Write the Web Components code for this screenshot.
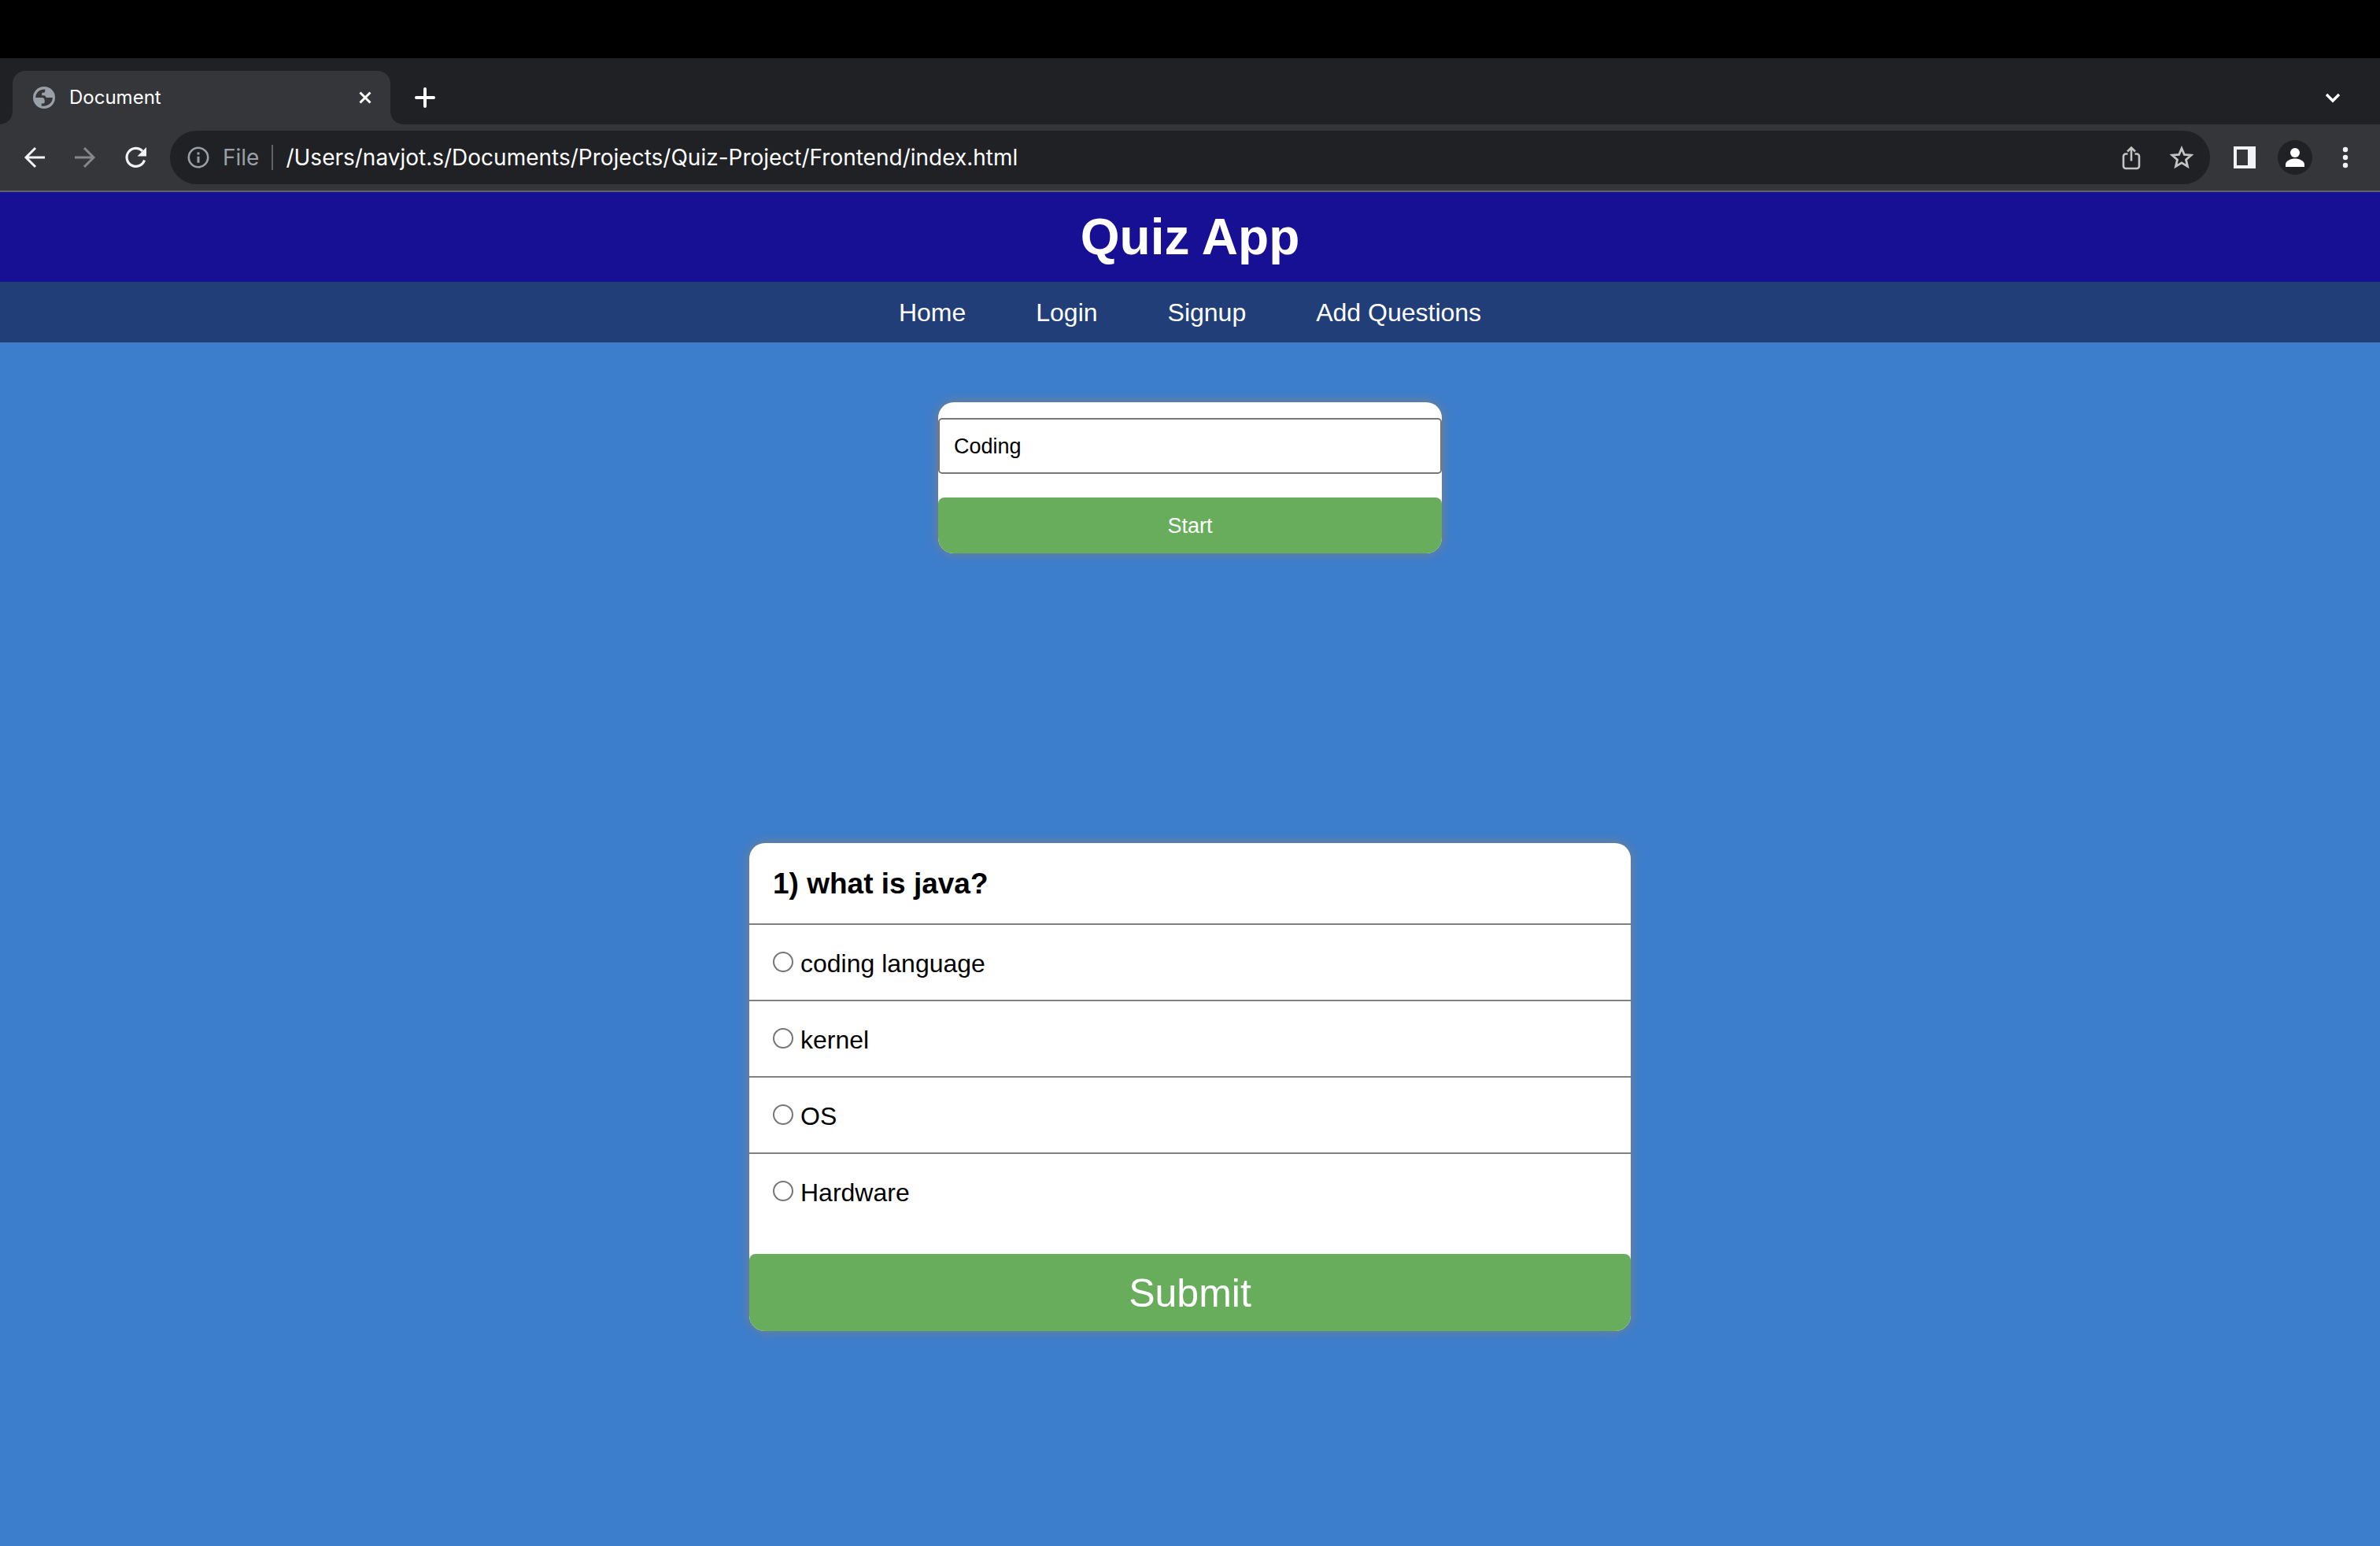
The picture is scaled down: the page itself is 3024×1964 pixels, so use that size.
<!DOCTYPE html>
<html lang="en">
<head>
<meta charset="utf-8">
<title>Document</title>
<style>
  html, body { margin: 0; min-height: 100vh; }
  body {
    display: flex; flex-direction: column;
    font-family: "Liberation Sans", Arial, Helvetica, sans-serif;
    background: #3c7dcc; color: #000;
  }
</style>
</head>
<body>
<browser-chrome></browser-chrome>
<quiz-header>Quiz App</quiz-header>
<quiz-nav>
  <quiz-link href="#home">Home</quiz-link>
  <quiz-link href="#login">Login</quiz-link>
  <quiz-link href="#signup">Signup</quiz-link>
  <quiz-link href="#add">Add Questions</quiz-link>
</quiz-nav>
<quiz-page>
  <quiz-picker slot="picker"></quiz-picker>
  <quiz-question heading="1) what is java?" options="coding language|kernel|OS|Hardware"></quiz-question>
</quiz-page>

<script>
function define(name, html, setup) {
  const template = document.createElement('template');
  template.innerHTML = html;
  customElements.define(name, class extends HTMLElement {
    constructor() {
      super();
      this.attachShadow({ mode: 'open' }).append(template.content.cloneNode(true));
    }
    connectedCallback() { if (setup) setup(this, this.shadowRoot); }
  });
}

define('browser-tab', `
<style>
  :host {
    display: flex; align-items: center; box-sizing: border-box;
    width: 480px; height: 68px; padding: 0 22px 0 24px; margin-left: 16px;
    background: #35363a; border-radius: 16px 16px 0 0; position: relative;
    font: 24px/32px Inter, Roboto, sans-serif; color: #fff;
  }
  :host::before, :host::after {
    content: ""; position: absolute; bottom: 0; width: 16px; height: 16px;
  }
  :host::before { left: -16px; background: radial-gradient(circle at 0 0, transparent 15.5px, #35363a 16px); }
  :host::after { right: -16px; background: radial-gradient(circle at 100% 0, transparent 15.5px, #35363a 16px); }
  svg { display: block; }
  span { flex: 1; margin-left: 16px; }
  button { border: 0; padding: 0; background: none; }
</style>
<svg width="32" height="32" viewBox="0 0 32 32"><circle cx="16" cy="16" r="14" fill="#9aa0a6"/><path d="M5.200 16C5.200 10 10 5.200 17.300 5.400V7.500c0 1.500-1 2.300-2.300 2.300h-1.700v2c0 1-.6 1.500-1.500 1.500H13l2.500 0c2 0 2.500 1 3 2.700h8.300c0 6.500-5.500 11.700-14.100 10.500V23.500h2c1.500 0 2-.8 2-2v-1.700c0-2.500-1-3.800-3.700-3.800z" fill="#35363a"/></svg>
<span><slot></slot></span>
<button aria-label="Close tab"><svg width="20" height="20" viewBox="0 0 20 20"><path d="M3.500 3.500l13 13M16.500 3.500l-13 13" stroke="#fff" stroke-width="3"/></svg></button>
`);

define('browser-chrome', `
<style>
  :host { display: block; }
  .notch { height: 74px; background: #000; }
  .tabs { display: flex; align-items: flex-end; height: 84px; background: #202124; }
  button { border: 0; padding: 0; background: none; display: flex; align-items: center; justify-content: center; }
  svg { display: block; }
  .tabs button { height: 68px; width: 56px; }
  .plus { margin-left: 16px; }
  .tabs .menu { margin-left: auto; margin-right: 32px; }
  .bar {
    display: flex; align-items: center; height: 84px; padding: 0 12px;
    background: #35363a; border-bottom: 2px solid #5f6368;
    font: 28px/36px Inter, Roboto, sans-serif;
  }
  .bar button { width: 64px; height: 64px; }
  .omni {
    flex: 1; display: flex; align-items: center; height: 68px; margin: 0 12px;
    border-radius: 34px; background: #202124; color: #9aa0a6;
  }
  .omni .info { width: 32px; margin: 0 15px 0 20px; }
  .sep { width: 2px; height: 32px; margin: 0 16px; background: #5f6368; }
  input { flex: 1; border: 0; padding: 0; background: none; color: #fff; font: inherit; outline: 0; }
  .omni .star { margin-right: 4px; }
</style>
<div class="notch"></div>
<div class="tabs">
  <browser-tab>Document</browser-tab>
  <button class="plus" aria-label="New tab"><svg width="28" height="28" viewBox="0 0 28 28"><path d="M14 3v22M3 14h22" stroke="#fff" stroke-width="4" stroke-linecap="round"/></svg></button>
  <button class="menu" aria-label="Search tabs"><svg width="24" height="24" viewBox="0 0 24 24"><path d="M4 8l8 8 8-8" fill="none" stroke="#fff" stroke-width="3.400"/></svg></button>
</div>
<div class="bar">
  <button aria-label="Back"><svg width="32" height="32" viewBox="0 0 32 32"><path d="M29 16H5M17 4L5 16l12 12" fill="none" stroke="#f1f3f4" stroke-width="3"/></svg></button>
  <button aria-label="Forward"><svg width="32" height="32" viewBox="0 0 32 32"><path d="M3 16h24M15 4l12 12-12 12" fill="none" stroke="#85878a" stroke-width="3"/></svg></button>
  <button aria-label="Reload"><svg width="32" height="32" viewBox="0 0 32 32"><path d="M27.500 19.500A11.500 11.500 0 1 1 25 8" fill="none" stroke="#f1f3f4" stroke-width="3.200"/><path d="M30 3v11.500H18.500z" fill="#f1f3f4"/></svg></button>
  <div class="omni">
    <button class="info" aria-label="Site information"><svg width="32" height="32" viewBox="0 0 32 32"><circle cx="16" cy="16" r="12.200" fill="none" stroke="#9aa0a6" stroke-width="2.600"/><path d="M16 9.500v3M16 14.800v8" stroke="#9aa0a6" stroke-width="3"/></svg></button>
    <span>File</span><div class="sep"></div>
    <input aria-label="Address" value="/Users/navjot.s/Documents/Projects/Quiz-Project/Frontend/index.html">
    <button aria-label="Share"><svg width="32" height="32" viewBox="0 0 32 32"><path d="M11.500 11.500H9a3 3 0 0 0-3 3V27a3 3 0 0 0 3 3h14a3 3 0 0 0 3-3V14.500a3 3 0 0 0-3-3h-2.500M16 20.500V4M11 8.500l5-5 5 5" fill="none" stroke="#c4c4c4" stroke-width="2.600"/></svg></button>
    <button class="star" aria-label="Bookmark"><svg width="32" height="32" viewBox="0 0 32 32"><path d="M16 4.500l3.400 8 8.600.7-6.500 5.700 2 8.500-7.500-4.500-7.500 4.500 2-8.500L4 13.200l8.600-.7z" fill="none" stroke="#c4c4c4" stroke-width="2.800"/></svg></button>
  </div>
  <button aria-label="Side panel"><svg width="28" height="28" viewBox="0 0 28 28"><path fill="#f1f3f4" fill-rule="evenodd" d="M0 0h28v28H0zM4 4v20h14V4z"/></svg></button>
  <button aria-label="Profile"><svg width="44" height="44" viewBox="0 0 44 44"><circle cx="22" cy="22" r="22" fill="#202124"/><circle cx="22" cy="16" r="6" fill="#fff"/><path d="M10 34v-3c0-5 7-7.500 12-7.500S34 26 34 31v3z" fill="#fff"/></svg></button>
  <button aria-label="Menu"><svg width="8" height="28" viewBox="0 0 8 28" fill="#f1f3f4"><circle cx="4" cy="4" r="3.200"/><circle cx="4" cy="14" r="3.200"/><circle cx="4" cy="24" r="3.200"/></svg></button>
</div>
`);

define('quiz-header', `
<style>
  :host { display: block; background: #170f94; color: #fff; padding: 20px; text-align: center; }
  h1 { margin: 0; font-size: 64px; line-height: 74px; }
</style>
<h1><slot></slot></h1>
`);

define('quiz-nav', `
<style>
  :host { display: block; background: #213e79; }
  nav { display: flex; justify-content: center; gap: 89px; padding: 21px 20px 19px; }
</style>
<nav><slot></slot></nav>
`);

define('quiz-link', `
<style>
  :host { display: block; }
  a { color: #fff; text-decoration: none; font-size: 32px; line-height: 37px; display: block; }
</style>
<a><slot></slot></a>
`, (host, root) => { root.querySelector('a').href = host.getAttribute('href'); });

define('quiz-page', `
<style>
  :host { display: flex; flex-direction: column; align-items: center; gap: 368px; padding: 76px 20px; }
</style>
<slot name="picker"></slot>
<slot></slot>
`);

define('quiz-card', `
<style>
  :host {
    display: flex; flex-direction: column; background: #fff;
    border-radius: 20px; box-shadow: 0 0 14px gray; overflow: hidden;
  }
</style>
<slot></slot>
`);

const buttonStyle = `
  button {
    border: 0; border-radius: 8px; padding: 21px 20px 19px; background: #68ad5c; color: #fff;
    font-family: inherit; text-align: center; width: 100%;
  }`;

define('quiz-picker', `
<style>
  :host { display: block; width: 640px; max-width: 100%; }
  select {
    appearance: none; display: block; width: 100%; box-sizing: border-box;
    margin: 20px 0 30px; padding: 19px 18px 17px; border: 2px solid #767676; border-radius: 5px;
    background: #fff; color: #000; font: 27px/31px "Liberation Sans", Arial, sans-serif;
  }
  ${buttonStyle}
  button { font-size: 27px; line-height: 31px; }
</style>
<quiz-card>
  <select aria-label="Category"><option>Coding</option></select>
  <button>Start</button>
</quiz-card>
`);

define('quiz-question', `
<style>
  :host { display: block; width: 1120px; max-width: 100%; }
  h3 { margin: 0; padding: 30px 30px 29px; font-size: 37px; line-height: 43px; }
  .row { display: flex; align-items: center; gap: 9px; padding: 32px 30px 28px; font-size: 32px; line-height: 35px; border-top: 2px solid #808080; }
  input {
    appearance: none; margin: 0 0 6px; width: 26px; height: 26px; box-sizing: border-box;
    border: 2px solid #767676; border-radius: 50%; background: #fff;
  }
  ${buttonStyle}
  button { margin-top: 32px; font-size: 50px; line-height: 58px; }
</style>
<quiz-card>
  <h3></h3>
  <div id="options"></div>
  <button>Submit</button>
</quiz-card>
`, (host, root) => {
  root.querySelector('h3').textContent = host.getAttribute('heading');
  host.getAttribute('options').split('|').forEach((text, i) => {
    const row = document.createElement('div');
    row.className = 'row';
    const input = document.createElement('input');
    input.type = 'radio';
    input.name = 'answer';
    input.id = 'answer' + i;
    const label = document.createElement('label');
    label.htmlFor = input.id;
    label.textContent = text;
    row.append(input, label);
    root.getElementById('options').append(row);
  });
});
</script>
</body>
</html>
